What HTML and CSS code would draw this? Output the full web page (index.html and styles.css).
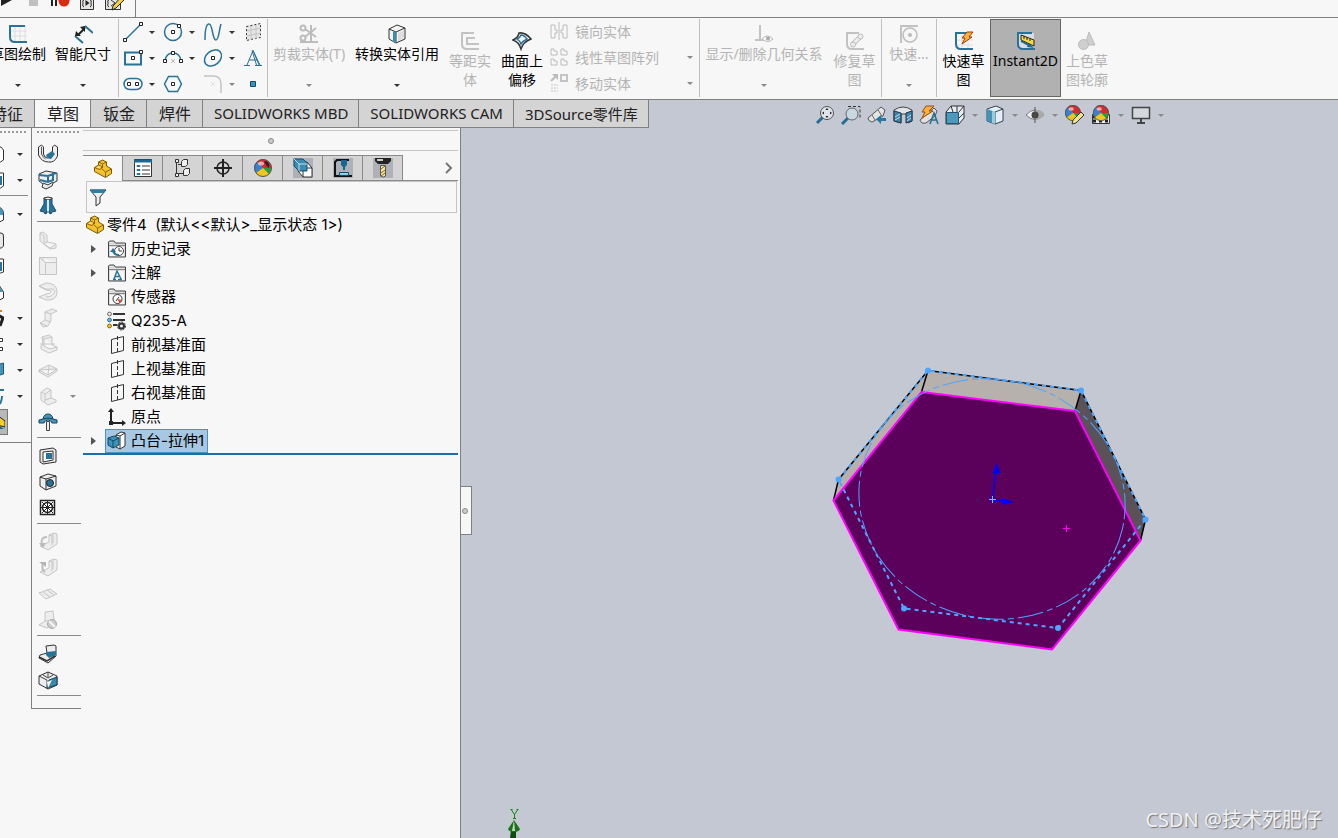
FILE: index.html
```html
<!DOCTYPE html>
<html lang="zh-CN">
<head>
    <meta charset="UTF-8">
    <meta name="viewport" content="width=device-width, initial-scale=1.0">
    <title>SOLIDWORKS - 零件4</title>
    <link rel="stylesheet" href="styles.css">
</head>
<body>

<!-- Shared icons -->
<svg class="sprite" aria-hidden="true">
    <symbol id="part" viewBox="0 0 20 20">
        <path d="M1.500 8.500l4-2.500V3l4-2 4 2v4l5 3v4.500l-6 4-11-6z" fill="#f4c22b" stroke="#7a5806"/>
        <path d="M1.500 8.500l5 2 2-1 4 3.500v5M5.500 6l3 1.500v2M5.500 3l4 2 4-2M9.500 5v4M12.500 13l6-3" fill="none" stroke="#8a6508"/>
        <path d="M3 8.500l3-1.500 2 1-2 1z" fill="#ffe07a"/>
    </symbol>
    <symbol id="folder" viewBox="0 0 20 20">
        <path d="M1.500 18V3l1-1H7l1.500 2H18.500V18z" fill="#dcdcdc" stroke="#444"/>
        <path d="M2 6.500H18" stroke="#888"/>
        <path d="M3 8H17V17H3z" fill="#f7f7f7"/>
    </symbol>
    <symbol id="plane" viewBox="0 0 20 20">
        <path d="M4.500 4.500L16.500 1.500V15.500L4.500 18.500z" fill="none" stroke="#333"/>
        <path d="M10.500 1V19" stroke="#333" stroke-dasharray="4 2"/>
    </symbol>
    <symbol id="ball" viewBox="0 0 20 20">
        <circle cx="10" cy="10" r="8.500" fill="#2f9a3d"/>
        <path d="M10 10L4 3.500A8.500 8.500 0 0 1 15 3z" fill="#d8292f"/>
        <path d="M10 10L4 3.500A8.500 8.500 0 0 0 3 15z" fill="#3a7fd0"/>
        <path d="M10 10L3 15A8.500 8.500 0 0 0 16 16z" fill="#f2c51d"/>
        <path d="M10 10L15 3A8.500 8.500 0 0 1 18.500 10z" fill="#d8292f"/>
        <circle cx="10" cy="10" r="8.500" fill="none" stroke="#555"/>
        <ellipse cx="8" cy="5.500" rx="3" ry="2" fill="#fff" opacity=".6"/>
    </symbol>
</svg>

<!-- Macro toolbar -->
<header class="menubar">
    <div class="macros">
        <button aria-label="运行"><svg viewBox="0 0 20 20"><path d="M5 3L16 8 5 14z" fill="#222"/></svg></button>
        <button aria-label="停止"><svg viewBox="0 0 20 20"><path d="M6 4h9v10H6z" fill="#c0c0c0"/></svg></button>
        <button aria-label="录制"><svg viewBox="0 0 20 20"><path d="M1 4h2v10H1zM5 4h2v10H5z" fill="#222"/><circle cx="14" cy="9" r="5.500" fill="#dc2a0c"/></svg></button>
        <button aria-label="新建宏"><svg viewBox="0 0 20 20"><path d="M3.500 4.500h13v13h-13z" fill="#e4e4e4" stroke="#333"/><path d="M7 8q-2 0-1 3-1 4 1 4M13 8q2 0 1 3 1 4-1 4" fill="none" stroke="#333"/><path d="M8.500 8l4 3-4 3z" fill="#222"/></svg></button>
        <button aria-label="编辑宏"><svg viewBox="0 0 20 20"><path d="M1.500 4.500h15v13h-15z" fill="#e4e4e4" stroke="#333"/><path d="M5 8q-2 0-1 3-1 4 1 4M7 8l4 3-4 3" fill="none" stroke="#333"/><path d="M8 18l1-4 8-9 3 3-8 8z" fill="#f4cf3c" stroke="#222"/></svg></button>
    </div>
</header>

<!-- Ribbon -->
<div class="ribbon">
    <button class="big wide-68"><svg viewBox="0 0 20 20"><path d="M7 2v16M12 2v16M17 2v16M2 7h17M2 12h17" stroke="#dedede"/><path class="b2" d="M17 2H2V13Q2 18 7 18H19"/></svg><span>草图绘制</span><i class="caret"></i></button>
    <button class="big wide-62"><svg viewBox="0 0 20 20"><path class="b2" d="M12 2l8 7M2 12l8 7"/><path d="M5 11l7-7" stroke="#222" stroke-width="2"/><path d="M12 2v6L7 3zM2 12l1-5 5 5z" fill="#222"/></svg><span>智能尺寸</span><i class="caret"></i></button>
    <div class="divider"></div>

    <div class="tools">
        <div><button aria-label="直线"><svg viewBox="0 0 20 20"><path class="b" d="M2 18L18 2"/><path class="pt" d="M.5 16.500h3v3h-3zM16.500.5h3v3h-3z"/></svg></button><button class="drop" aria-label="更多直线"><i class="caret"></i></button></div>
        <div><button aria-label="圆"><svg viewBox="0 0 20 20"><circle class="b" cx="10" cy="10" r="8.500"/><path class="pt" d="M8.500 8.500h3v3h-3zM14.500 2.500h3v3h-3z"/></svg></button><button class="drop" aria-label="更多圆"><i class="caret"></i></button></div>
        <div><button aria-label="样条曲线"><svg viewBox="0 0 20 20"><path class="b" d="M2 18C2 6 4 2 6 2 10 2 9 18 13 18 16 18 16 8 18 2"/></svg></button><button class="drop" aria-label="更多样条曲线"><i class="caret"></i></button></div>
        <div><button aria-label="基准面"><svg viewBox="0 0 20 20"><path d="M3.500 4.500l14-3v14l-14 3z" fill="#e6e6e6" stroke="#333" stroke-dasharray="2 2"/><path d="M8 4v14M13 3v14M4 9l14-3M4 14l14-3" stroke="#c4c4c4"/></svg></button></div>
        <div><button aria-label="矩形"><svg viewBox="0 0 20 20"><path class="b2" d="M2 4.500h16v12H2z"/><path class="pt" d="M8.500 8.500h3v3h-3zM16.500 2.500h3v3h-3z"/></svg></button><button class="drop" aria-label="更多矩形"><i class="caret"></i></button></div>
        <div><button aria-label="圆弧"><svg viewBox="0 0 20 20"><path class="b" d="M2 13Q3 5 10 5T18 13"/><path d="M8 11l4 4M12 11l-4 4" stroke="#bbb"/><path class="pt" d="M.5 11.500h3v3h-3zM16.500 11.500h3v3h-3zM8.500 3.500h3v3h-3z"/></svg></button><button class="drop" aria-label="更多圆弧"><i class="caret"></i></button></div>
        <div><button aria-label="椭圆"><svg viewBox="0 0 20 20"><ellipse class="b" cx="10" cy="10" rx="9.500" ry="7" transform="rotate(-40 10 10)"/><path class="pt" d="M8.500 8.500h3v3h-3z"/></svg></button><button class="drop" aria-label="更多椭圆"><i class="caret"></i></button></div>
        <div><button aria-label="文字"><svg viewBox="0 0 20 20"><path d="M1 17.500h6M4 17L10 2.500 16 17M12 17.500h7M6 12h8M9 2.500L13.500 17M10 2.500L17 17" fill="none" stroke="#2a7398"/></svg></button></div>
        <div><button aria-label="槽口"><svg viewBox="0 0 20 20"><rect class="b" x="1" y="4.500" width="18" height="11" rx="5.500"/><path class="pt" d="M4.500 8.500h3v3h-3zM12.500 8.500h3v3h-3z"/></svg></button><button class="drop" aria-label="更多槽口"><i class="caret"></i></button></div>
        <div><button aria-label="多边形"><svg viewBox="0 0 20 20"><path class="b" d="M5.500 2.500h9l4 7.500-4 7.500h-9L1.500 10z"/><path class="pt" d="M8.500 8.500h3v3h-3z"/></svg></button></div>
        <div><button disabled aria-label="圆角"><svg viewBox="0 0 20 20"><path d="M1 2h9q8 0 8 8v9" fill="none" stroke="#c4c4c4" stroke-width="1.500"/><path d="M8 8l4 4M12 8l-4 4" stroke="#e0e0e0"/></svg></button><button class="drop" disabled aria-label="更多圆角"><i class="caret"></i></button></div>
        <div><button aria-label="点"><svg viewBox="0 0 20 20"><path d="M7.500 7.500h5v5h-5z" fill="#3b93ba" stroke="#174c68"/></svg></button></div>
    </div>
    <div class="divider"></div>

    <button class="big wide-82" disabled><svg viewBox="0 0 20 20"><g fill="none" stroke="#bcbcbc" stroke-width="2"><circle cx="4" cy="4" r="2.500"/><circle cx="4" cy="14" r="2.500"/><path d="M6 5l11 8M6 13L17 4M12 1v18M1 18h18"/></g></svg><span>剪裁实体(T)</span><i class="caret"></i></button>
    <button class="big wide-94"><svg viewBox="0 0 20 20"><path d="M2 5l8-4 8 3v11l-9 4-7-4z" fill="#f4f4f4" stroke="#333"/><path d="M2 5l7 3 9-4M9 8v11" fill="none" stroke="#333"/><path d="M6 7l3 1v11l-3-1z" fill="#3a8cb2"/><path d="M11 9l6-3v8l-6 3z" fill="#ddd"/></svg><span>转换实体引用</span><i class="caret"></i></button>
    <button class="big low wide-52" disabled><svg viewBox="0 0 20 20"><path d="M14 2H2V13Q2 18 7 18H19M15 7H7V13H19" fill="none" stroke="#c2c2c2" stroke-width="2"/></svg><span>等距实体</span></button>
    <button class="big low wide-52"><svg viewBox="0 0 20 20"><path d="M1 9Q6 7 7 2Q13 1 19 8Q11 11 9 18Q7 11 1 9z" fill="#f2f2f2" stroke="#333" stroke-width="1.500"/><path class="b" d="M5 8Q8 7 9 4Q12 4 15 8Q11 10 9 13Q8 10 5 8z"/></svg><span>曲面上偏移</span></button>

    <div class="list">
        <div><button disabled><svg viewBox="0 0 20 20"><path d="M2 4h4v5h2v3H6v5H2zM18 4h-4v5h-2v3h2v5h4zM10 1v18" fill="none" stroke="#bcbcbc"/></svg>镜向实体</button></div>
        <div><button disabled><svg viewBox="0 0 20 20"><path d="M2 2h3v2h3v4H2zM12 2h3v2h3v4h-6zM2 12h3v2h3v4H2zM12 12h3v2h3v4h-6z" fill="none" stroke="#bcbcbc"/></svg>线性草图阵列</button><button class="drop" disabled aria-label="更多阵列"><i class="caret"></i></button></div>
        <div><button disabled><svg viewBox="0 0 20 20"><path d="M2 8l6-6" stroke="#bcbcbc" stroke-width="2"/><path d="M3 1h6v6z" fill="#bcbcbc"/><path d="M12 2h6v6h-6z" fill="none" stroke="#c4c4c4" stroke-width="2"/><path d="M2 12h7M2 18h7M2 15h7" stroke="#ddd" stroke-width="2" stroke-dasharray="2 1"/></svg>移动实体</button><button class="drop" disabled aria-label="更多移动"><i class="caret"></i></button></div>
    </div>
    <div class="divider"></div>

    <button class="big wide-128" disabled><svg viewBox="0 0 20 20"><path d="M6 1v15M1 16h9" stroke="#c2c2c2" stroke-width="2"/><path d="M8 15q5-6 11 0-5 5-11 0z" fill="#f7f7f7" stroke="#bbb"/><circle cx="14" cy="14.500" r="2" fill="#aaa"/></svg><span>显示/删除几何关系</span><i class="caret"></i></button>
    <button class="big low wide-53" disabled><svg viewBox="0 0 20 20"><path d="M14 2H2V13Q2 18 7 18H19" fill="none" stroke="#c2c2c2" stroke-width="2"/><path d="M8 13l7-7" stroke="#c2c2c2" stroke-width="5"/><path d="M8 13l7-7" stroke="#eee" stroke-width="3"/><circle cx="15.500" cy="5.500" r="2.500" fill="#eee" stroke="#bbb"/><circle cx="8" cy="13.500" r="2.500" fill="#eee" stroke="#bbb"/></svg><span>修复草图</span></button>
    <div class="divider"></div>
    <button class="big wide-54" disabled><svg viewBox="0 0 20 20"><path d="M1 2h18M2 2v17" stroke="#c2c2c2" stroke-width="2"/><circle cx="11" cy="11" r="7" fill="none" stroke="#bcbcbc" stroke-width="1.500"/><circle cx="11" cy="11" r="2" fill="#bbb"/></svg><span>快速...</span><i class="caret"></i></button>
    <div class="divider"></div>
    <button class="big low wide-53"><svg viewBox="0 0 20 20"><path d="M8 4v14M14 4v14M2 9h17M2 14h17" stroke="#dedede"/><path class="b2" d="M12 2H2V13Q2 18 7 18H19"/><path d="M13 1h6l-4 5h3L8 13l3-6H8z" fill="#fbb03b" stroke="#9a3a0a"/></svg><span>快速草图</span></button>
    <button class="big low pressed"><svg viewBox="0 0 20 20"><path d="M2 2h16v16H2z" fill="#d8dde0"/><path class="b2" d="M16 2H2V13Q2 18 7 18H19"/><path d="M5 4l13 5v6L5 9z" fill="#f6d940" stroke="#222"/><path d="M8 5v3M11 6v3M14 8v2" stroke="#222"/><path d="M5 10l9 5" stroke="#1d6890" stroke-width="2"/><path d="M13 12l5 5-7-1z" fill="#1d6890"/></svg><span>Instant2D</span></button>
    <button class="big low wide-52" disabled><svg viewBox="0 0 20 20"><path d="M12 1l6 13H8z" fill="#cfcfcf" stroke="#bdbdbd"/><circle cx="6.500" cy="13.500" r="5" fill="#cfcfcf" stroke="#bdbdbd"/></svg><span>上色草图轮廓</span></button>
</div>

<!-- Command tabs and view toolbar -->
<div class="tabrow">
    <nav class="tabs">
        <button>特征</button>
        <button class="active">草图</button>
        <button>钣金</button>
        <button>焊件</button>
        <button class="addin">SOLIDWORKS MBD</button>
        <button class="addin">SOLIDWORKS CAM</button>
        <button class="addin">3DSource零件库</button>
    </nav>
    <div class="viewbar">
        <button aria-label="整屏显示全图"><svg viewBox="0 0 20 20"><path d="M2 18l6-6" stroke="#266d92" stroke-width="3"/><circle cx="12" cy="8" r="6.500" fill="#dde4ea" stroke="#555"/><path d="M12 3l1.500 2h-3zM12 13l1.500-2h-3zM7 8l2-1.500v3zM17 8l-2-1.500v3z" fill="#222"/></svg></button>
        <button aria-label="局部放大"><svg viewBox="0 0 20 20"><path d="M7 1.500h12v12" fill="none" stroke="#333" stroke-dasharray="3 2"/><path d="M1 19l6-6" stroke="#266d92" stroke-width="3"/><circle cx="11" cy="9" r="6" fill="#c7d8e2" stroke="#666"/></svg></button>
        <button aria-label="上一视图"><svg viewBox="0 0 20 20"><path d="M1 13L14 2l4 3-2 6-11 6q-4-1-4-4z" fill="#e4e4e4" stroke="#555"/><path d="M11 5l4 6M5 10l3 5" stroke="#666"/><path d="M9 14l5-4v3h5v3h-5v3z" fill="#2378a4"/></svg></button>
        <button aria-label="剖面视图"><svg viewBox="0 0 20 20"><path d="M1 5q9-6 18 0v11l-4 2V9H8v9l-7-2z" fill="#e0e4e6" stroke="#444"/><path d="M1 6l7 2v10l-7-2zM13 8l6-2v10l-6 2z" fill="#3c87aa" stroke="#234"/><path d="M2 12l5-3M2 15l5-3M14 13l4-3M14 16l4-3" stroke="#cde"/></svg></button>
        <button aria-label="动态注解视图"><svg viewBox="0 0 20 20"><path d="M1 15L15 3l3 3-2 5-9 7q-5 1-6-3z" fill="#e0e0e0" stroke="#555"/><path d="M7 1h8l-5 5h4L3 13l3-6H3z" fill="#fbb03b" stroke="#9a4a10"/><path d="M11 19l4-11 4 11M12 15h6" fill="none" stroke="#266d92" stroke-width="1.500"/></svg></button>
        <button aria-label="视图定向"><svg viewBox="0 0 20 20"><path d="M1 7l5-6h13v12l-5 6H1z" fill="#e8ecef" stroke="#333"/><path d="M14 7l5-6M14 13l5-5M6 1l2 6M12 1v6" stroke="#333"/><path d="M1.500 7.500h12v11h-12z" fill="#4b9abd" stroke="#25536b"/></svg></button>
        <button class="drop" aria-label="更多视图"><i class="caret"></i></button>
        <button aria-label="显示样式"><svg viewBox="0 0 20 20"><path d="M2 4l9-3 7 3v12l-8 3-8-3z" fill="#e4eef3" stroke="#345"/><path d="M2 4l8 3v12l-8-3z" fill="#4293b8"/><path d="M10 7l8-3M10 7v12" stroke="#345"/><path d="M7 6l3 1v12l-3-1z" fill="#9ccbe0"/></svg></button>
        <button class="drop" aria-label="更多样式"><i class="caret"></i></button>
        <button aria-label="隐藏所有类型"><svg viewBox="0 0 20 20"><path d="M1 10q9-10 18 0-9 9-18 0z" fill="#f0f0f0" stroke="#777"/><path d="M10 5q9 0 9 5-4 5-9 5z" fill="#aaa"/><circle cx="10" cy="10" r="3.500" fill="#444"/><path d="M10 2v16" stroke="#555"/></svg></button>
        <button class="drop" aria-label="更多类型"><i class="caret"></i></button>
        <button aria-label="编辑外观"><svg viewBox="0 0 20 20"><use href="#ball" x="-1" y="-1" width="18" height="18"/><path d="M7 19l1-4 8-8 3 3-8 8z" fill="#f7df8e" stroke="#333"/></svg></button>
        <button aria-label="应用布景"><svg viewBox="0 0 20 20"><path d="M1.500 9.500h17v9h-17z" fill="#eee" stroke="#333"/><path d="M2 12h16M2 16h16" stroke="#222" stroke-width="3" stroke-dasharray="3 3"/><use href="#ball" x="1" y="-1" width="18" height="18"/></svg></button>
        <button class="drop" aria-label="更多布景"><i class="caret"></i></button>
        <button aria-label="视图设定"><svg viewBox="0 0 20 20"><path d="M1.500 2.500h17v11h-17z" fill="#d4d8dc" stroke="#444" stroke-width="1.500"/><path d="M10 14v4M6 18h8" stroke="#444" stroke-width="2"/></svg></button>
        <button class="drop" aria-label="更多设定"><i class="caret"></i></button>
    </div>
</div>

<div class="workspace">
    <!-- Features toolbar -->
    <div class="strip features">
        <div class="grip"></div>
        <div class="row"><button aria-label="拉伸"><svg viewBox="0 0 20 20"><path d="M5 3h12l2.500 3v10l-3 2H5z" fill="#fff" stroke="#333"/></svg></button><button class="drop" aria-label="更多拉伸"><i class="caret"></i></button></div>
        <div class="row"><button aria-label="切除"><svg viewBox="0 0 20 20"><path d="M5 3h14.500v13l-3 2H5z" fill="#fff" stroke="#333"/><path d="M10 6h8v9h-8z" fill="#2a7398"/></svg></button><button class="drop" aria-label="更多切除"><i class="caret"></i></button></div>
        <hr>
        <div class="row"><button aria-label="圆角"><svg viewBox="0 0 20 20"><path d="M5 3h9q6 1 5.500 8v5l-4 2H5z" fill="#fff" stroke="#333"/><path d="M5 3h9q6 1 5 8-6 0-14-4z" fill="#4595b8"/></svg></button><button class="drop" aria-label="更多圆角"><i class="caret"></i></button></div>
        <div class="row"><button aria-label="筋"><svg viewBox="0 0 20 20"><path d="M5 3h12q3 0 2.500 4v9l-2 2H5z" fill="#e8e8e8" stroke="#333"/></svg></button></div>
        <div class="row"><button aria-label="抽壳"><svg viewBox="0 0 20 20"><path d="M5 3h14.500v13l-3 1H5z" fill="#fff" stroke="#333"/><path d="M8 6h10v9H8z" fill="#2a7398"/></svg></button></div>
        <div class="row"><button aria-label="拔模"><svg viewBox="0 0 20 20"><path d="M5 3h10l4.500 7v6l-4 2H5z" fill="#fff" stroke="#333"/><path d="M5 3h10l4 7H5z" fill="#4595b8"/></svg></button></div>
        <div class="row"><button aria-label="孔"><svg viewBox="0 0 20 20"><path d="M12 6l7 4-3 8" fill="none" stroke="#222" stroke-width="3"/><path d="M16 2h2v2h-2z" fill="#e5820c"/></svg></button><button class="drop" aria-label="更多孔"><i class="caret"></i></button></div>
        <div class="row"><button aria-label="阵列"><svg viewBox="0 0 20 20"><path d="M12 4.500h6.500v3H12zM12 13.500h6.500v3H12z" fill="#fff" stroke="#333"/></svg></button><button class="drop" aria-label="更多阵列"><i class="caret"></i></button></div>
        <div class="row"><button aria-label="参考"><svg viewBox="0 0 20 20"><path d="M5 7l14.500-4v11l-14 4z" fill="#4595b8" stroke="#1d5676"/></svg></button><button class="drop" aria-label="更多参考"><i class="caret"></i></button></div>
        <div class="row"><button aria-label="曲线"><svg viewBox="0 0 20 20"><path class="b2" d="M12 4h8M16 18q2-4 2-8"/></svg></button><button class="drop" aria-label="更多曲线"><i class="caret"></i></button></div>
        <div class="row"><button class="on" aria-label="Instant3D"><svg viewBox="0 0 20 20"><path d="M12 3l8 6v6l-8-2z" fill="#f6d027" stroke="#222"/><path d="M12 12l7 5h-7z" fill="#1d6890"/></svg></button></div>
    </div>

    <!-- Sheet metal toolbar -->
    <div class="strip sheet">
        <div class="grip"></div>
        <button aria-label="基体法兰"><svg viewBox="0 0 20 20"><path d="M0.500 3l3-2 2 2v7q1 4 4 4t5-4V3l2-2 3 2v9q-3 7-9 6-7 0-10-7z" fill="#eee" stroke="#333"/><path d="M8 11l6-4 3 3-4 5q-4 0-5-4z" fill="#2a7398"/><path d="M3.500 3v7q2 4 4 5" fill="none" stroke="#555"/></svg></button>
        <button aria-label="转换到钣金"><svg viewBox="0 0 20 20"><path d="M1 4l7-3 11 2v8l-4 2-1 3-6 3-4-2 1-3-4-3z" fill="#eee" stroke="#333"/><path d="M1 5l9 1 8-3M10 6v5M2 10l8 2 5-2V3" fill="none" stroke="#2a7398" stroke-width="2"/><path d="M5 13l5 2 5-3" fill="none" stroke="#333"/></svg></button>
        <button aria-label="放样折弯"><svg viewBox="0 0 20 20"><path d="M6 2h8v6l4 7-4 1-1 2-2-1v-3H9v3l-2 1-1-2-4-1 4-7z" fill="#2a7398" stroke="#1c4c66"/><path d="M6 2q4-2 8 0v1q-4 2-8 0z" fill="#eee" stroke="#333"/><path d="M10 4v11" stroke="#dceaf0" stroke-width="2"/></svg></button>
        <hr>
        <button disabled aria-label="边线法兰"><svg viewBox="0 0 20 20"><path class="g" d="M2 3l3-1 4 3v7l9 2v4l-6 1-10-8zM2 3l4 3v8M9 12l-3 2 6 4 6-4"/></svg></button>
        <button disabled aria-label="斜接法兰"><svg viewBox="0 0 20 20"><path class="g" d="M1.500 1.500h17v17h-17zM1.500 1.500l6 5h11M7.500 6.500v12M5 1.500v3"/></svg></button>
        <button disabled aria-label="褶边"><svg viewBox="0 0 20 20"><path class="g" d="M1 4l7-3q11 0 11 9t-11 8l-7-3 7-3q5 0 5-2t-5-2zM1 4l7 3h8M8 15q8 0 9-7"/></svg></button>
        <button disabled aria-label="转折"><svg viewBox="0 0 20 20"><path class="g" d="M7 4l7-3 5 2-6 3v6l-3 6-5 1-3-4 5-3zM7 4l6 2M7 12l6 2M2 15l7 3"/></svg></button>
        <button disabled aria-label="绘制的折弯"><svg viewBox="0 0 20 20"><path class="g" d="M4 3l7-2 3 2v8l5 2v3l-8 3-8-4v-3l2-1zM4 3l2 2v7l6 3 7-2M6 5l7-2M2 10h15"/></svg></button>
        <button disabled aria-label="交叉折断"><svg viewBox="0 0 20 20"><path class="g" d="M1 10l10-5 8 4-9 6zM1 10l18-1M11 5l-1 10M1 10v2l9 5 9-6V9"/></svg></button>
        <div class="row"><button disabled aria-label="边角"><svg viewBox="0 0 20 20"><path class="g" d="M3 6l6-4 4 2v8l5 2v2l-8 3-7-5zM3 6l4 2v8M7 8l6-4M7 14l6-2"/></svg></button><button class="drop" disabled aria-label="更多边角"><i class="caret"></i></button></div>
        <button aria-label="成形工具"><svg viewBox="0 0 20 20"><path d="M1 8l4-1q1-5 5-5t5 5l4 1v3h-5q-1-3-4-3t-4 3H1z" fill="#4595b8" stroke="#1d4258"/><path d="M5 7q5-2 10 0" fill="none" stroke="#1d4258"/><path d="M8.500 9.500h3v9h-3z" fill="#eee" stroke="#444"/></svg></button>
        <hr>
        <button aria-label="拉伸切除"><svg viewBox="0 0 20 20"><path d="M2 4l13-2 3 2v12l-13 2-3-2z" fill="#e8e8e8" stroke="#333"/><path d="M5 6l10-1v9L5 16z" fill="#fff" stroke="#333"/><path d="M8 7h6v6H8z" fill="#2a7398"/></svg></button>
        <button aria-label="简单直孔"><svg viewBox="0 0 20 20"><path d="M2 5l8-3 8 2v10l-10 4-6-4z" fill="#eee" stroke="#333"/><path d="M2 5l6 2 10-3M8 7v11" fill="none" stroke="#333"/><circle cx="12" cy="11" r="3.500" fill="#2a7398" stroke="#222"/></svg></button>
        <button aria-label="通风口"><svg viewBox="0 0 20 20"><path d="M2.500 2.500h14v14h-14z" fill="#fff" stroke="#222" stroke-width="1.500"/><circle cx="9.500" cy="9.500" r="5" fill="none" stroke="#222" stroke-width="1.500"/><path d="M9.500 3v13M3 9.500h13M4 4l11 11M15 4L4 15" stroke="#222"/></svg></button>
        <hr>
        <button disabled aria-label="展开"><svg viewBox="0 0 20 20"><path class="g" d="M11 3l5-2 3 1v10l-9 6-8-4 9-4zM11 3l3 1v9M15 2v9"/><path d="M9 5q-7 0-5 8" fill="none" stroke="#c0c0c0" stroke-width="2"/><path d="M1 11h7l-3 5z" fill="#bbb"/></svg></button>
        <button disabled aria-label="折叠"><svg viewBox="0 0 20 20"><path class="g" d="M11 3l5-2 3 1v10l-9 6-8-4 9-4zM11 3l3 1v9M15 2v9"/><path d="M7 14Q3 12 5 5" fill="none" stroke="#bbb" stroke-width="2"/><path d="M1 4h7v5z" fill="#b5b5b5"/></svg></button>
        <button disabled aria-label="展平"><svg viewBox="0 0 20 20"><path class="g" d="M1 9l11-4 7 5-11 5zM5 8l7 5M9 6l7 5"/></svg></button>
        <button disabled aria-label="不折弯"><svg viewBox="0 0 20 20"><path class="g" d="M7 2l8-1 1 9-9 1zM7 11l-6 4 8 3 9-5-2-3"/><circle cx="14" cy="14" r="4.500" fill="#ccc" stroke="#aaa"/><path d="M11 11l6 6" stroke="#f7f7f7" stroke-width="2"/></svg></button>
        <hr>
        <button aria-label="插入折弯"><svg viewBox="0 0 20 20"><path d="M8 2l8-1 2 1v10l-8 7-9-5 1-3 7-2z" fill="#eee" stroke="#333"/><path d="M8 8l10-1v4l-7 3-3-3z" fill="#2a7398"/><path d="M1 13l8 4 8-5" fill="none" stroke="#333" stroke-width="1.500"/></svg></button>
        <button aria-label="切口"><svg viewBox="0 0 20 20"><path d="M1 6l9-4 9 4v9l-9 4-9-5z" fill="#eee" stroke="#333"/><path d="M1 6l8 4v9M5 5l5 3 5-3M10 2v5" fill="none" stroke="#444"/><path d="M9 18l2-8 8-3v8z" fill="#3b88ab" stroke="#1d4258"/><path d="M9 12l5-2-4 8z" fill="#fff"/></svg></button>
        <hr>
    </div>

    <!-- Feature manager -->
    <aside class="manager">
        <div class="splitter"><span class="dot"></span></div>
        <div class="panes">
            <button class="active" aria-label="设计树"><svg viewBox="0 0 20 20"><use href="#part"/></svg></button>
            <button aria-label="属性"><svg viewBox="0 0 20 20"><path d="M1.500 1.500h17v17h-17z" fill="#fff" stroke="#333"/><path d="M1 3h18" stroke="#1d6890" stroke-width="3"/><path d="M4 7.500h3v1H4zM4 11.500h3v1H4zM4 15.500h3v1H4z" stroke="#2a7398"/><path d="M9 8h8M9 12h8M9 16h8" stroke="#333"/></svg></button>
            <button aria-label="配置"><svg viewBox="0 0 20 20"><path d="M3.500 4v14M5 6.500h4M5 15.500h6" stroke="#333" fill="none"/><path d="M2.500 1.500h3v3h-3zM2.500 15.500h3v3h-3zM8.500 3.500l2-2h4v5l-2 2h-4zM10.500 12.500l2-2h4v5l-2 2h-4z" fill="#eee" stroke="#333"/></svg></button>
            <button aria-label="尺寸专家"><svg viewBox="0 0 20 20"><circle cx="10" cy="10" r="6" fill="none" stroke="#222" stroke-width="1.500"/><path d="M10 1v18M1 10h18" stroke="#222" stroke-width="2"/></svg></button>
            <button aria-label="外观"><svg viewBox="0 0 20 20"><use href="#ball"/><path d="M11 3q6 0 5 7l-3-3z" fill="#222"/></svg></button>
            <button aria-label="CAM 特征"><svg class="tint" viewBox="0 0 20 20"><path d="M5 5l9-1 5 6v9H10l-5-6z" fill="#fff" stroke="#333"/><path d="M10 10h9M10 10v9M5 5l5 5" stroke="#333"/><path d="M1 1h9l4 4v8H6L1 8z" fill="#3c8bb0" stroke="#174c68"/><path d="M1 1l5 5h8M6 6v7" fill="none" stroke="#bfe0ee"/></svg></button>
            <button aria-label="CAM 操作"><svg class="tint" viewBox="0 0 20 20"><path d="M16 2H4L2 4v14h17" fill="none" stroke="#111" stroke-width="2"/><path d="M8 2h6v5l-2 2v3h-2V9L8 7z" fill="#166690"/><path d="M6.500 14.500h9v3h-9z" fill="#8dd0ec" stroke="#174c68"/></svg></button>
            <button aria-label="CAM 刀具"><svg class="tint" viewBox="0 0 20 20"><path d="M2 0h16v3l-3 3H5L2 3z" fill="#222"/><path d="M4 2h6" stroke="#ccc" stroke-width="2"/><path d="M7.500 7.500h5V18l-2 1-3-1z" fill="#f7e6a0" stroke="#555"/><path d="M8 11l4-3M8 15l4-3M8 18l4-3" stroke="#8a6508"/></svg></button>
            <button class="more" aria-label="更多"><svg viewBox="0 0 20 20"><path d="M8 5l5 5-5 5" fill="none" stroke="#777" stroke-width="2"/></svg></button>
        </div>
        <label class="filter"><svg viewBox="0 0 20 20"><path d="M2 3h16l-6 7v6l-4 3v-9z" fill="#eee" stroke="#333"/><path d="M2 2.500h16L16 6H4z" fill="#2a7fa8"/></svg><input type="text" aria-label="过滤"></label>

        <ul class="tree">
            <li class="root"><svg viewBox="0 0 20 20"><use href="#part"/></svg><span>零件4&nbsp; (默认&lt;&lt;默认&gt;_显示状态 1&gt;)</span></li>
            <li class="closed"><div><svg viewBox="0 0 20 20"><use href="#folder"/><circle cx="12" cy="12" r="4.500" fill="#fff" stroke="#444"/><path d="M12 9v3h3" fill="none" stroke="#444"/><path d="M12 16q-5 0-6-4" fill="none" stroke="#2a7398" stroke-width="2"/><path d="M3 13l3-4 3 4z" fill="#2a7398"/></svg><span>历史记录</span></div></li>
            <li class="closed"><div><svg viewBox="0 0 20 20"><use href="#folder"/><path d="M6 16.500h3M11 16.500h4M7 16l3-8 4 8M8 13.500h4" fill="none" stroke="#2a7398" stroke-width="1.500"/></svg><span>注解</span></div></li>
            <li><div><svg viewBox="0 0 20 20"><use href="#folder"/><circle cx="10.500" cy="12" r="4.500" fill="#fff" stroke="#333"/><path d="M10.500 12l4 1-2 3z" fill="#dc3a1a"/><path d="M9 14l3-4" stroke="#333"/></svg><span>传感器</span></div></li>
            <li><div><svg viewBox="0 0 20 20"><circle cx="2.500" cy="3" r="1.900" fill="#eee" stroke="#666"/><circle cx="2.500" cy="9" r="1.900" fill="#6bb9e0" stroke="#2a7398"/><circle cx="2.500" cy="15" r="1.900" fill="#f5c31c" stroke="#8a6508"/><path d="M6 3h12M6 9h12M6 14h4" stroke="#333" stroke-width="2"/><circle cx="14.500" cy="15" r="2.500" fill="none" stroke="#333" stroke-width="2"/><circle cx="14.500" cy="15" r="4" fill="none" stroke="#333" stroke-dasharray="2 1"/></svg><span>Q235-A</span></div></li>
            <li><div><svg viewBox="0 0 20 20"><use href="#plane"/></svg><span>前视基准面</span></div></li>
            <li><div><svg viewBox="0 0 20 20"><use href="#plane"/></svg><span>上视基准面</span></div></li>
            <li><div><svg viewBox="0 0 20 20"><use href="#plane"/></svg><span>右视基准面</span></div></li>
            <li><div><svg viewBox="0 0 20 20"><path d="M4 4v12h11" fill="none" stroke="#222" stroke-width="2"/><path d="M4 1l3 4H1zM19 16l-4-3v6z" fill="#222"/><path d="M2 14h4v4H2z" fill="#222"/></svg><span>原点</span></div></li>
            <li class="closed selected"><div><svg viewBox="0 0 20 20"><path d="M9 4l5-3 4 1v13l-5 3-4-2z" fill="#fff" stroke="#333"/><path d="M9 4l4 1 5-3M13 5v13" fill="none" stroke="#333"/><path d="M1 7l6-2 5 2v7l-6 3-5-3z" fill="#3c94ba" stroke="#15465f"/><path d="M1 7l5 3 6-3M6 10v7" fill="none" stroke="#15465f"/></svg><span>凸台-拉伸1</span></div></li>
        </ul>
    </aside>

    <!-- Graphics area -->
    <main class="viewport">
        <button class="collapse" aria-label="折叠面板"><span class="dot"></span></button>

        <svg class="model" viewBox="0 0 340 320">
            <path d="M108 20.500L101.500 42 13.500 150.500 18.500 129.500z" fill="#b6b1ad"/>
            <path d="M108 20.500L261 40.500 255 61 101.500 42z" fill="#b6b1ad"/>
            <path d="M261 40.500L325.500 169.500 320.500 190.500 255 61z" fill="#5b5158"/>
            <path d="M108 20.500L101.500 42M261 40.500L255 61M325.500 169.500L320.500 190.500M18.500 129.500L13.500 150.500" stroke="#000" stroke-width="1.500"/>
            <path d="M101.500 42L255 61 320.500 190.500 232 299.500 78.500 279.500 13.500 150.500z" fill="#5b005b" stroke="#f0f" stroke-width="2"/>
            <path d="M18.500 129.500L108 20.500 261 40.500 325.500 169.500" fill="none" stroke="#000" stroke-width="1.500"/>
            <path d="M18.500 129.500L108 20.500 261 40.500 325.500 169.500" fill="none" stroke="#4da6ff" stroke-width="2" stroke-dasharray="4 4"/>
            <path d="M325.500 169.500L238 278 84 258.500 18.500 129.500" fill="none" stroke="#4da6ff" stroke-width="2" stroke-dasharray="4 4"/>
            <ellipse cx="172" cy="149" rx="133.800" ry="119.500" transform="rotate(13 172 149)" fill="none" stroke="#4da6ff" stroke-dasharray="26 4 6 4"/>
            <g fill="#4da6ff"><circle cx="108" cy="20.500" r="3"/><circle cx="261" cy="40.500" r="3"/><circle cx="325.500" cy="169.500" r="3"/><circle cx="238" cy="278" r="3"/><circle cx="84" cy="258.500" r="3"/><circle cx="18.500" cy="129.500" r="3"/></g>
            <path d="M172.500 149.500L175.500 122M172.500 149.500L184 151" stroke="#00f" stroke-width="1.500"/>
            <path d="M176.500 113l4 11h-8zM194 152l-12-4v7z" fill="#00f"/>
            <path d="M169.500 146.500l6 6M175.500 146.500l-6 6" stroke="#00f"/>
            <path d="M172.500 146v7M169 149.500h7" stroke="#6fc0ff"/>
            <path d="M246.500 175v7M243 178.500h7" stroke="#f0f"/>
        </svg>

        <svg class="triad" viewBox="0 0 20 32">
            <path d="M6.500 3.500h2M12.500 3.500h2M7.500 4l3 4.500 3-4.500M10.500 8v5M9 12.500h3" fill="none" stroke="#0a8a0a"/>
            <path d="M7 24h5v8H6z" fill="#0b4d0b"/>
            <path d="M10 14l6 9q-1 3-6 3t-6-3z" fill="#1d6f1d"/>
            <path d="M10 14l1 11H8z" fill="#b7e0b0"/>
        </svg>

        <p class="watermark">CSDN @技术死肥仔</p>
    </main>
</div>

</body>
</html>
```
FILE: styles.css
```css
/* General styles */
* {
    box-sizing: border-box;
}

body {
    margin: 0;
    height: 100vh;
    display: flex;
    flex-direction: column;
    overflow: hidden;
    background-color: #f7f7f7;
    color: #000;
    font-family: "Noto Sans", "Noto Sans CJK SC", sans-serif;
    font-size: 14px;
}

button {
    display: flex;
    align-items: center;
    justify-content: center;
    flex-shrink: 0;
    margin: 0;
    padding: 0;
    border: 0;
    background: none;
    color: inherit;
    font: inherit;
}

button:disabled {
    color: #b4b4b4;
}

svg {
    display: block;
    flex-shrink: 0;
    width: 20px;
    height: 20px;
}

.sprite {
    position: absolute;
    width: 0;
    height: 0;
}

hr {
    width: 100%;
    height: 1px;
    margin: 2px 0 5px;
    border: 0;
    background-color: #8a8a8a;
}

/* Icon strokes */
.b,
.b2 {
    fill: none;
    stroke: #2a7398;
    stroke-width: 1.5;
}

.b2 {
    stroke-width: 2;
}

.g {
    fill: #ededed;
    stroke: #c6c6c6;
}

.pt {
    fill: #fff;
    stroke: #222;
}

.caret {
    width: 0;
    height: 0;
    border: 3px solid transparent;
    border-top-color: #333;
    border-bottom-width: 0;
}

button:disabled .caret,
.viewbar .caret {
    border-top-color: #8a8a8a;
}

.drop {
    width: 14px;
    height: 20px;
}

.dot {
    width: 6px;
    height: 6px;
    border: 1px solid #888;
    border-radius: 50%;
    background-color: #ccc;
}

/* Macro toolbar */
.menubar {
    flex-shrink: 0;
    height: 18px;
    border-bottom: 1px solid #808080;
}

.macros {
    display: flex;
    width: max-content;
    height: 17px;
    margin-left: -8px;
    padding-right: 8px;
    border-right: 1px solid #808080;
}

.macros button {
    width: 27px;
    height: 20px;
    margin-top: -8px;
}

/* Ribbon */
.ribbon {
    display: flex;
    flex-shrink: 0;
    height: 82px;
    margin-left: -16px;
    border-bottom: 1px solid #808080;
}

.divider {
    flex-shrink: 0;
    width: 1px;
    margin: 1px 0 2px;
    background-color: #c0c0c0;
}

.big {
    flex-direction: column;
    justify-content: flex-start;
    padding-top: 6px;
    line-height: 19px;
}

.big .caret {
    margin-top: 21px;
}

.big.low {
    padding-top: 13px;
}

.big.low span {
    width: 44px;
}

.wide-52 {
    width: 52px;
}

.wide-53 {
    width: 53px;
}

.wide-54 {
    width: 54px;
}

.wide-62 {
    width: 62px;
    margin-right: 4px;
}

.wide-68 {
    width: 68px;
}

.wide-82 {
    width: 82px;
}

.wide-94 {
    width: 94px;
}

.wide-128 {
    width: 128px;
}

.big.pressed {
    width: 71px;
    height: 78px;
    margin-top: 1px;
    padding-top: 11px;
    border: 1px solid #666;
    background-color: #b1b1b1;
}

.big.pressed span {
    width: auto;
}

.tools {
    display: grid;
    grid-template-columns: 40px 40px 40px 26px;
    grid-auto-rows: 26px;
    padding: 1px 0 0 2px;
}

.tools div {
    display: flex;
    align-items: center;
}

.tools button {
    width: 24px;
}

.tools .drop {
    width: 14px;
}

.list {
    width: 151px;
}

.list div {
    display: flex;
    align-items: center;
    justify-content: space-between;
    height: 26px;
    padding: 0 2px 0 1px;
}

.list svg {
    margin-right: 6px;
}

/* Command tabs */
.tabrow {
    display: flex;
    flex-shrink: 0;
    height: 28px;
    background-color: #c4c8d2;
}

.tabs {
    display: flex;
    margin-left: -21px;
}

.tabs button {
    padding: 0 11px 1px 12px;
    border-right: 1px solid #808080;
    border-bottom: 1px solid #808080;
    background-color: #d4d4d4;
    color: #222;
    font-size: 16px;
}

.tabs .addin {
    padding: 0 10px 1px 11px;
    font-size: 15px;
}

.tabs .active {
    background-color: #f7f7f7;
}

/* View toolbar */
.viewbar {
    display: flex;
    flex: 1;
    align-items: center;
    justify-content: center;
    padding: 2px 6px 0 0;
}

.viewbar button {
    width: 26px;
}

.viewbar .drop {
    width: 14px;
}

/* Workspace */
.workspace {
    display: flex;
    flex: 1;
    min-height: 0;
}

.strip {
    flex-shrink: 0;
    align-self: flex-start;
}

.strip button {
    width: 24px;
    height: 26px;
}

.strip .drop {
    width: 12px;
}

.strip .row {
    display: flex;
}

.grip {
    height: 2px;
    margin: 3px 0 8px;
    background: repeating-linear-gradient(90deg, #999 0 2px, transparent 2px 4px);
}

.features {
    width: 47px;
    margin-left: -16px;
    padding-bottom: 7px;
    border-bottom: 1px solid #808080;
}

.features button {
    justify-content: flex-start;
}

.features .drop {
    justify-content: center;
    margin-left: 6px;
}

.features .on {
    border: 1px solid #777;
    background-color: #b8b8b8;
}

.features .grip,
.features hr {
    width: 44px;
}

.sheet {
    width: 50px;
    padding: 0 0 7px 5px;
    border-left: 1px solid #808080;
    border-bottom: 1px solid #808080;
}

.sheet button {
    width: 22px;
}

.sheet .drop {
    width: 12px;
    margin-left: 8px;
}

/* Feature manager */
.manager {
    flex-shrink: 0;
    width: 380px;
    padding: 2px 2px 0;
    border-right: 1px solid #808080;
}

.splitter {
    display: flex;
    align-items: center;
    justify-content: center;
    height: 21px;
    border-top: 1px solid #c4c4c4;
    border-bottom: 1px solid #c4c4c4;
}

.panes {
    display: flex;
    height: 26px;
    margin-top: 4px;
    border-bottom: 1px solid #8a8a8a;
}

.panes button {
    width: 40px;
    border-top: 1px solid #8a8a8a;
    border-right: 1px solid #8a8a8a;
    background-color: #d4d4d4;
}

.panes .active {
    height: 26px;
    background-color: #f7f7f7;
}

.panes .more {
    width: 20px;
    margin-left: auto;
    border: 0;
    background: none;
}

.tint {
    background-color: #aeb1b8;
}

.filter {
    display: flex;
    align-items: center;
    height: 32px;
    margin: 0 1px 0 3px;
    padding-left: 1px;
    border: 1px solid #c4c4c4;
}

.filter input {
    flex: 1;
    border: 0;
    outline: 0;
    background: none;
    font: inherit;
}

.tree {
    margin: 0;
    padding: 0;
    border-bottom: 2px solid #1b6ea8;
    list-style: none;
    font-family: Inter, "Noto Sans CJK SC", sans-serif;
    font-size: 15px;
}

.tree li {
    position: relative;
    display: flex;
    align-items: center;
    height: 24px;
    padding-left: 22px;
    line-height: 22px;
    white-space: nowrap;
}

.tree li div {
    display: flex;
    align-items: center;
    height: 24px;
    padding: 0 3px 0 1px;
    border: 1px solid transparent;
}

.tree svg {
    margin-right: 4px;
}

.tree .root {
    padding-left: 2px;
}

.tree .root svg {
    margin-right: 2px;
}

.tree .closed::before {
    content: "";
    position: absolute;
    left: 8px;
    border: 4px solid transparent;
    border-left: 5px solid #555;
    border-right: 0;
}

.tree .selected div {
    border-color: #4a93c4;
    background-color: #a6c8e2;
}

/* Graphics area */
.viewport {
    position: relative;
    flex: 1;
    overflow: hidden;
    background-color: #c4c8d2;
}

.collapse {
    position: absolute;
    top: 358px;
    left: -1px;
    width: 12px;
    height: 49px;
    padding-right: 1px;
    border: 1px solid #808080;
    border-left: 0;
    background-color: #f7f7f7;
}

.model {
    position: absolute;
    top: 222px;
    left: 359px;
    width: 340px;
    height: 320px;
}

.triad {
    position: absolute;
    bottom: 0;
    left: 43px;
    height: 32px;
}

.watermark {
    position: absolute;
    right: 16px;
    bottom: 4px;
    margin: 0;
    color: #eef0f4;
    font-size: 20px;
    line-height: 28px;
    text-shadow: 1px 1px 1px #777;
}
```
